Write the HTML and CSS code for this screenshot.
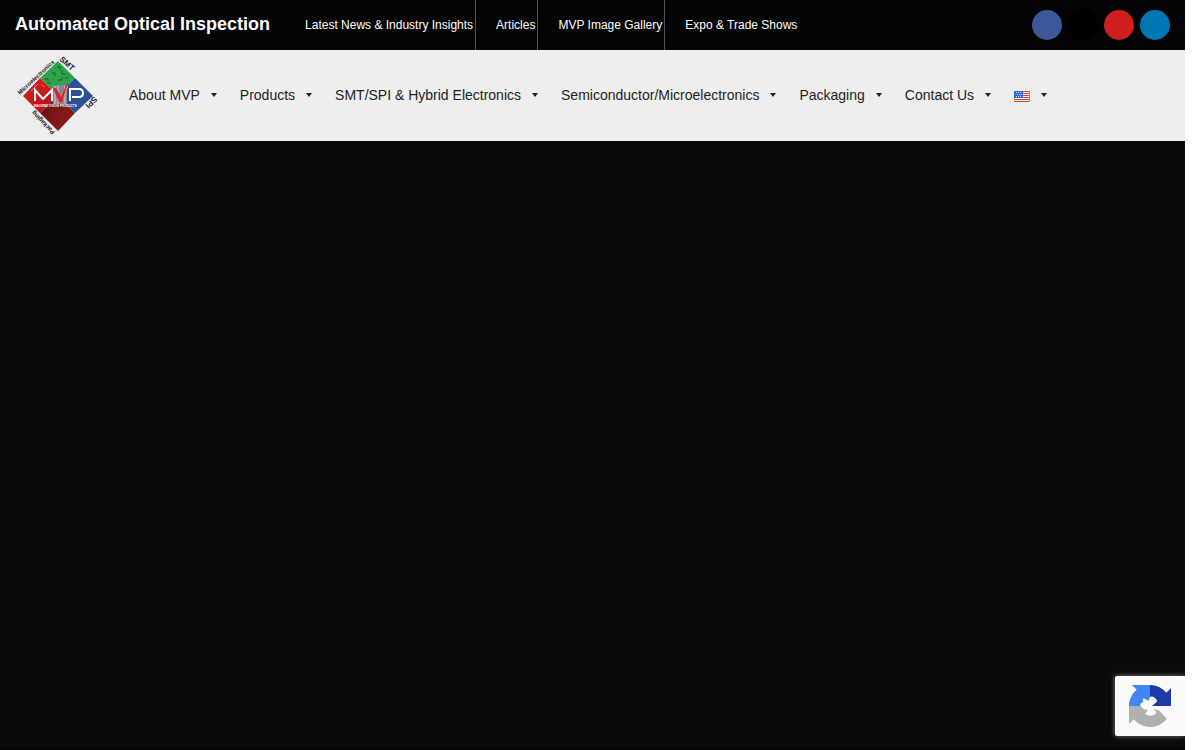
FILE: index.html
```html
<!DOCTYPE html>
<html lang="en">
<head>
    <meta charset="UTF-8">
    <meta name="viewport" content="width=device-width, initial-scale=1.0">
    <title>Automated Optical Inspection</title>
    <link rel="stylesheet" href="styles.css">
</head>
<body>

    <div class="page">
        <div class="top-bar">
            <h1 class="site-title">Automated Optical Inspection</h1>
            <nav class="top-links" aria-label="Secondary">
                <a href="#">Latest News &amp; Industry Insights</a>
                <a href="#">Articles</a>
                <a href="#">MVP Image Gallery</a>
                <a href="#">Expo &amp; Trade Shows</a>
            </nav>
            <div class="social">
                <a href="#" class="facebook" aria-label="Facebook"></a>
                <a href="#" class="twitter" aria-label="X"></a>
                <a href="#" class="youtube" aria-label="YouTube"></a>
                <a href="#" class="linkedin" aria-label="LinkedIn"></a>
            </div>
        </div>

        <header class="header">
            <a href="#" class="logo" aria-label="MVP home">
                <svg width="84" height="84" viewBox="0 0 84 84">
                    <defs>
                        <linearGradient id="red" x1="0" y1="0" x2="1" y2="1">
                            <stop offset="0" stop-color="#e3201f"/>
                            <stop offset="1" stop-color="#a51216"/>
                        </linearGradient>
                        <linearGradient id="dark" x1="0" y1="0" x2="1" y2="1">
                            <stop offset="0" stop-color="#5c1512"/>
                            <stop offset="1" stop-color="#9c1a1c"/>
                        </linearGradient>
                    </defs>
                    <path d="M43 8L60 25L43 43L25 25Z" fill="#2fa34c"/>
                    <path d="M25 25L43 43L25 60L8 43Z" fill="url(#red)"/>
                    <path d="M60 25L78 43L60 60L43 43Z" fill="#2c4f9c"/>
                    <path d="M43 43L60 60L43 78L25 60Z" fill="url(#dark)"/>
                    <path d="M29 26h4v2M37 20h3v3M47 17v4h4M32 30h4M50 25h4M42 14h3v3M43 27h4v-3" fill="none" stroke="#14612c"/>
                    <path d="M16 38l5-5M20 34l3-3M26 32l4 2" fill="none" stroke="#ff7468"/>
                    <path d="M38 32h14v19H38z" fill="#85888c"/>
                    <path d="M40 33v18M43 33v18M50 33v18" stroke="#c9cccf"/>
                    <g fill="none" stroke="#fff" stroke-width="2">
                        <path d="M20 48V37L28 46L37 37V48"/>
                        <path d="M55 48V36H64Q68 36 68 40Q68 44 64 44H57"/>
                        <path d="M46 47L52 33"/>
                    </g>
                    <path d="M38 35h3l5 9l6-14l1 1l-6 18h-3z" fill="#e11d2b"/>
                    <text class="logo-name" x="19" y="54">MACHINE VISION PRODUCTS</text>
                    <text class="logo-label" transform="translate(5 42) rotate(-43)">Microelectronics</text>
                    <text class="logo-label logo-big" transform="translate(44 7) rotate(42)">SMT</text>
                    <text class="logo-label logo-big" transform="translate(79 43) rotate(135)">SPI</text>
                    <text class="logo-label" transform="translate(40 79) rotate(-134)">Packaging</text>
                </svg>
            </a>
            <nav class="menu" aria-label="Primary">
                <a href="#">About MVP <span class="arrow"></span></a>
                <a href="#">Products <span class="arrow"></span></a>
                <a href="#">SMT/SPI &amp; Hybrid Electronics <span class="arrow"></span></a>
                <a href="#">Semiconductor/Microelectronics <span class="arrow"></span></a>
                <a href="#">Packaging <span class="arrow"></span></a>
                <a href="#">Contact Us <span class="arrow"></span></a>
                <a href="#" aria-label="English">
                    <svg class="flag" width="16" height="11" viewBox="0 0 16 11" shape-rendering="crispEdges">
                        <path d="M0 0h16v11H0z" fill="#fff"/>
                        <path d="M0 0h16v1H0zM0 2h16v1H0zM0 4h16v1H0zM0 6h16v1H0zM0 8h16v1H0zM0 10h16v1H0z" fill="#d8472f"/>
                        <path d="M0 0h1v11H0zM15 0h1v11h-1z" fill="#c8805c"/>
                        <path d="M0 0h9v7H0z" fill="#3468d8"/>
                        <path d="M2 1.5h6M3 3.5h6M2 5.5h6" stroke="#d5e4ff" stroke-dasharray="1 1"/>
                    </svg>
                    <span class="arrow"></span>
                </a>
            </nav>
        </header>

        <main class="content"></main>
    </div>

    <div class="captcha">
        <svg width="42" height="42" viewBox="0 0 64 64" role="img" aria-label="reCAPTCHA">
            <path d="M64 32V4.642l-7.185 7.173C50.946 4.628 42.016 0 32 0v18q5-2 8 2q4 3 2 6l-7 6z" fill="#1c3aa9"/>
            <path d="M32 0H4.544l7.173 7.173C4.53 13.17 0 22.1 0 32h17q0-5 5-6q-2-3 0-6l8 4l2-6z" fill="#4285f4"/>
            <path d="M0 32v27.548l7.303-7.173C13.172 59.562 22.1 64 32.1 64c10.407 0 19.652-4.966 25.491-12.656L46 39l-9-3l5 5q-1 4-5 5q-8 2-12-2l4-7q-6 3-11-5z" fill="#b0b0b0"/>
        </svg>
    </div>

</body>
</html>
```
FILE: styles.css
```css
* {
    margin: 0;
    padding: 0;
    box-sizing: border-box;
}

body {
    font-family: "Liberation Sans", Arial, sans-serif;
    background-color: #fff;
    padding-right: 15px;
}

a {
    color: inherit;
    text-decoration: none;
}

.page {
    display: flex;
    flex-direction: column;
    min-height: 100vh;
    background-color: #0a0a0a;
    border-bottom: 2px solid #040404;
}

.top-bar {
    display: flex;
    align-items: center;
    height: 50px;
    padding: 0 15px;
    background-color: #040404;
    color: #fff;
}

.site-title {
    font-size: 18px;
    line-height: 24px;
    padding-bottom: 2px;
    margin-right: 15px;
}

.top-links {
    display: flex;
    font-size: 12px;
    line-height: 50px;
}

.top-links a {
    padding: 0 2px 0 20px;
    border-right: 1px solid #555;
}

.top-links a:last-child {
    border-right: none;
}

.social {
    display: flex;
    gap: 6px;
    margin-left: auto;
}

.social a {
    width: 30px;
    height: 30px;
    border-radius: 50%;
}

.facebook {
    background-color: #3b5998;
}

.twitter {
    background-color: #000;
}

.youtube {
    background-color: #cd201f;
}

.linkedin {
    background-color: #0077b5;
}

.header {
    display: flex;
    align-items: center;
    height: 91px;
    padding: 0 0 2px 15px;
    background-color: #eee;
}

.logo {
    display: flex;
    margin-right: 20px;
}

.logo-name {
    font-size: 3px;
    font-weight: bold;
    fill: #fff;
}

.logo-label {
    font-size: 6px;
    font-weight: bold;
    fill: #222;
}

.logo-big {
    font-size: 8px;
}

.menu {
    display: flex;
    font-size: 14px;
    line-height: 40px;
    color: #222;
}

.menu a {
    display: flex;
    align-items: center;
    padding: 0 10px;
}

.flag {
    margin-top: 3px;
}

.arrow {
    width: 20px;
    padding: 1px 0 0 11px;
}

.arrow::before {
    content: "";
    display: block;
    width: 0;
    border: 3px solid transparent;
    border-top: 4px solid #222;
    border-bottom: none;
}

.content {
    flex: 1;
}

.captcha {
    position: fixed;
    right: 15px;
    bottom: 14px;
    display: flex;
    align-items: center;
    width: 70px;
    height: 60px;
    padding-left: 14px;
    background-color: #fafafa;
    border-radius: 2px 0 0 2px;
    box-shadow: 0 0 5px gray;
    clip-path: inset(-5px 0 -5px -5px);
}
```
